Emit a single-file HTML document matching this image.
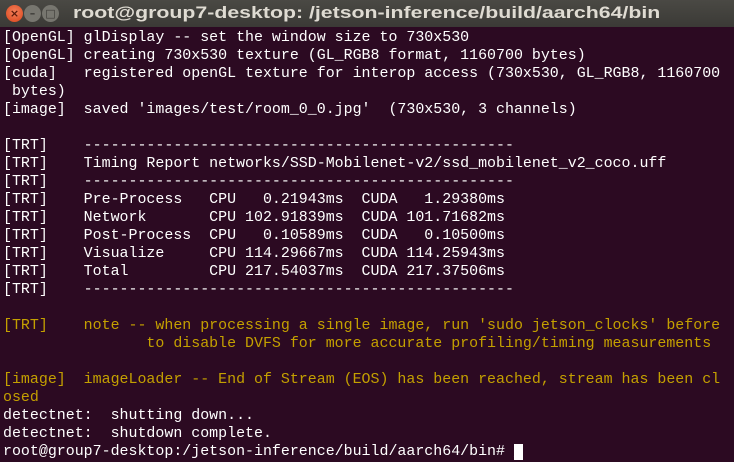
<!DOCTYPE html>
<html><head><meta charset="utf-8"><style>
html,body{margin:0;padding:0;width:734px;height:462px;overflow:hidden;background:#2c0a22}
.tb{position:absolute;left:0;top:0;width:734px;height:27px;background:linear-gradient(#4a4944,#3b3a36);}
.title{position:absolute;left:73px;top:4px;font:bold 16.5px "Liberation Sans",sans-serif;color:#dfdbd2;white-space:nowrap;transform:scaleX(1.29);transform-origin:0 0}
.btn{position:absolute;top:5px;width:17px;height:17px;border-radius:50%;}
.b1{left:6px;background:radial-gradient(circle at 50% 40%,#f4805a,#d9441a);}
.b2,.b3{background:#77766f;border:0}
.b2{left:24px}.b3{left:42px}
.btn span{position:absolute;left:0;top:0;width:17px;height:17px;text-align:center;font:bold 11px/17px "DejaVu Sans",sans-serif;color:#3c3b37}
.term{position:absolute;left:3px;top:29px;font-family:"Liberation Mono",monospace;font-size:14.95px;line-height:18px;color:#ffffff;white-space:pre;}
.y{color:#c4a000}
.cur{background:#fff;color:#fff}
</style></head><body>
<div class="tb"><div class="btn b1"><span style="color:#5a1a0a">×</span></div><div class="btn b2"><span>–</span></div><div class="btn b3"><span>□</span></div>
<div class="title">root@group7-desktop: /jetson-inference/build/aarch64/bin</div></div>
<div class="term">[OpenGL] glDisplay -- set the window size to 730x530
[OpenGL] creating 730x530 texture (GL_RGB8 format, 1160700 bytes)
[cuda]   registered openGL texture for interop access (730x530, GL_RGB8, 1160700
 bytes)
[image]  saved 'images/test/room_0_0.jpg'  (730x530, 3 channels)

[TRT]    ------------------------------------------------
[TRT]    Timing Report networks/SSD-Mobilenet-v2/ssd_mobilenet_v2_coco.uff
[TRT]    ------------------------------------------------
[TRT]    Pre-Process   CPU   0.21943ms  CUDA   1.29380ms
[TRT]    Network       CPU 102.91839ms  CUDA 101.71682ms
[TRT]    Post-Process  CPU   0.10589ms  CUDA   0.10500ms
[TRT]    Visualize     CPU 114.29667ms  CUDA 114.25943ms
[TRT]    Total         CPU 217.54037ms  CUDA 217.37506ms
[TRT]    ------------------------------------------------

<span class="y">[TRT]    note -- when processing a single image, run 'sudo jetson_clocks' before
                to disable DVFS for more accurate profiling/timing measurements</span>

<span class="y">[image]  imageLoader -- End of Stream (EOS) has been reached, stream has been cl
osed</span>
detectnet:  shutting down...
detectnet:  shutdown complete.
root@group7-desktop:/jetson-inference/build/aarch64/bin# <span class="cur">_</span></div>
</body></html>
